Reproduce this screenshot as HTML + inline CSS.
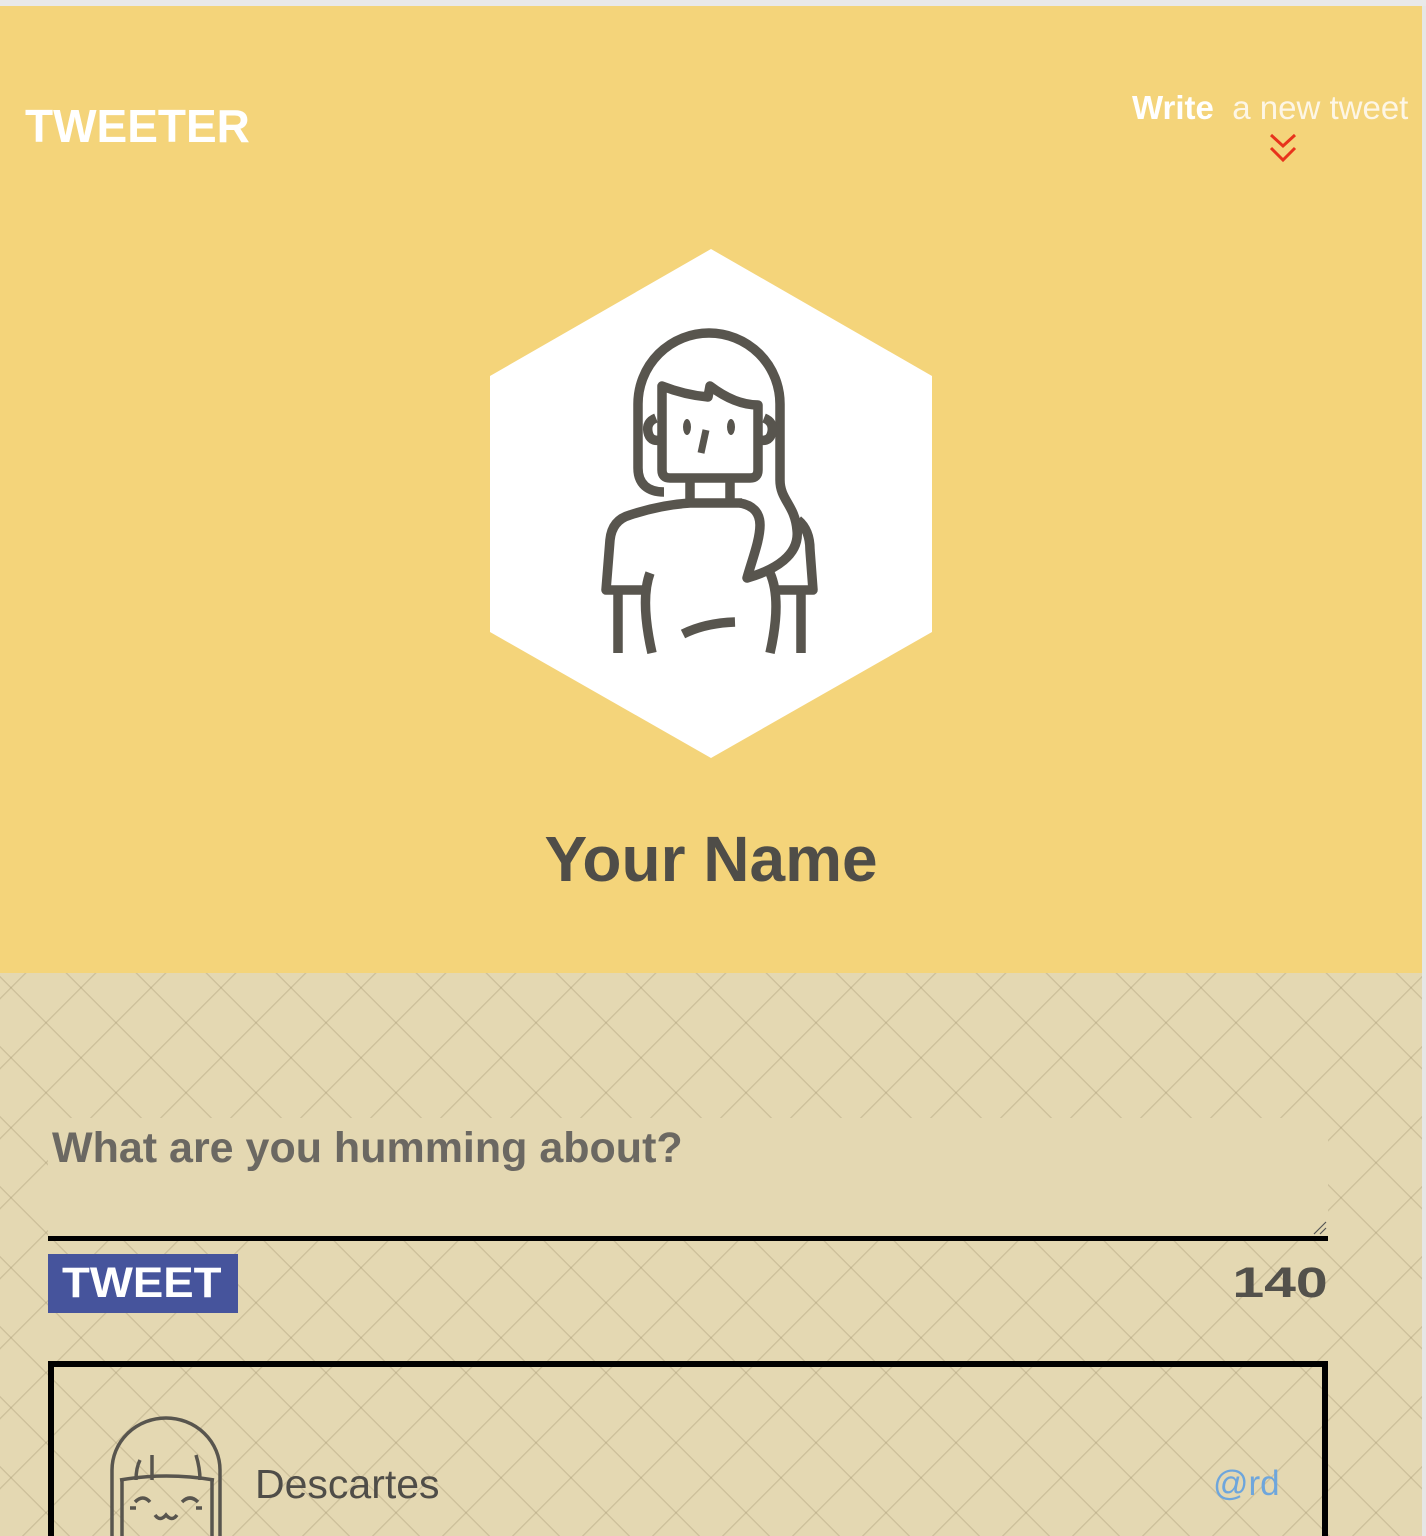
<!DOCTYPE html>
<html><head><meta charset="utf-8">
<style>
*{margin:0;padding:0;box-sizing:border-box}
html,body{width:1426px;height:1536px;overflow:hidden;background:#fff}
body{position:relative;font-family:"Liberation Sans",sans-serif}
#top{position:absolute;left:0;top:0;width:1426px;height:6px;background:#e9e9e9}
#hdr{position:absolute;left:0;top:6px;width:1422px;height:967px;background:#f4d47a}
#edge{position:absolute;left:1422px;top:6px;width:4px;height:1530px;background:#e6e6e6}
#low{position:absolute;left:0;top:973px;width:1422px;height:563px;background-color:#e4d8b2;
background-image:repeating-linear-gradient(45deg,transparent 0,transparent 48.3px,rgba(150,135,100,.28) 48.3px,rgba(150,135,100,.28) 49.5px),
repeating-linear-gradient(-45deg,transparent 0,transparent 48.3px,rgba(150,135,100,.28) 48.3px,rgba(150,135,100,.28) 49.5px);}
.logo{position:absolute;left:25px;top:100px;font-size:46px;font-weight:900;color:#fff;letter-spacing:0px;line-height:52px}
.write{position:absolute;left:1132px;top:88px;font-size:33px;color:#fff;line-height:40px;white-space:nowrap}
.write b{font-weight:bold}
.write span{font-weight:normal;color:#fdf6e6}
.name{position:absolute;left:0;width:1422px;text-align:center;top:822px;font-size:64px;font-weight:bold;color:#4f4d48}
#ta{position:absolute;left:48px;top:1118px;width:1280px;height:118px;background:#e4d8b2}
#tal{position:absolute;left:48px;top:1236px;width:1280px;height:5px;background:#000}
.q{position:absolute;left:52px;top:1124px;font-size:43px;font-weight:bold;color:#6b6862}
.btn{position:absolute;left:48px;top:1254px;width:190px;height:59px;background:#46549c}
.btn span{position:absolute;left:14px;top:4px;font-size:43px;font-weight:900;color:#fff;transform:scaleX(1.06);transform-origin:left;line-height:50px}
.cnt{position:absolute;right:98px;top:1258px;font-size:43px;font-weight:900;color:#53514b;transform:scaleX(1.33);transform-origin:right;line-height:50px}
#card{position:absolute;left:48px;top:1361px;width:1280px;height:200px;border:6px solid #000}
.desc{position:absolute;left:255px;top:1461px;font-size:41px;color:#4f4d48}
.at{position:absolute;left:1213px;top:1464px;font-size:35px;color:#6ea6dc}
</style></head><body>
<div id="top"></div>
<div id="hdr"></div>
<div id="low"></div>
<div id="edge"></div>
<div class="logo">TWEETER</div>
<div class="write"><b>Write</b> <span>&nbsp;a new tweet</span></div>
<svg style="position:absolute;left:0;top:0" width="1426" height="1536">
<polyline points="1271,135 1283,146 1295,135" fill="none" stroke="#e8331c" stroke-width="3"/>
<polyline points="1271,148 1283,160 1295,148" fill="none" stroke="#e8331c" stroke-width="3"/>
<polygon points="711,249 932,376 932,632 711,758 490,632 490,376" fill="#fff"/>
<g fill="none" stroke="#58554e" stroke-width="9.5" stroke-linejoin="round">
<path d="M 664 492 C 648 492 638 484 638 468 L 638 404 A 71 71 0 0 1 780 404 L 780 480 C 780 500 795 505 797 530 C 800 555 775 570 747 578 C 752 560 760 540 760 525 C 760 512 752 505 740 503"/>
<path d="M 662 386 L 662 470 Q 662 478 670 478 L 750 478 Q 758 478 758 470 L 758 405 Q 735 405 710 386 L 708 397 Q 685 395 662 386 Z"/>
<path d="M 656 418 Q 646 422 648 432 Q 650 442 660 440"/>
<path d="M 764 418 Q 774 422 772 432 Q 770 442 760 440"/>
<path d="M 690 478 L 690 500 M 730 478 L 730 500"/>
<path d="M 742 503 L 690 503 Q 660 505 630 515 Q 612 520 610 540 L 606 590 L 642 590"/>
<path d="M 618 590 L 618 653"/>
<path d="M 650 573 Q 640 600 652 653"/>
<path d="M 798 520 Q 810 530 810 550 L 813 590 L 775 590"/>
<path d="M 801 590 L 801 653"/>
<path d="M 770 573 Q 782 600 770 653"/>
<path d="M 683 634 Q 705 623 735 622"/>
</g>
<g fill="#58554e"><ellipse cx="687" cy="427" rx="4" ry="8"/><ellipse cx="731" cy="427" rx="4" ry="8"/></g>
<path d="M 706 430 L 701 453" stroke="#58554e" stroke-width="7"/>
</svg>
<div class="name">Your Name</div>
<div id="ta"></div>
<div class="q">What are you humming about?</div>
<svg style="position:absolute;left:1312px;top:1220px" width="16" height="16"><path d="M2 14 L14 2 M8 14 L14 8" stroke="#555" stroke-width="1.2"/></svg>
<div id="tal"></div>
<div class="btn"><span>TWEET</span></div>
<div class="cnt">140</div>
<div id="card"></div>
<svg style="position:absolute;left:100px;top:1410px" width="130" height="126">
<g fill="none" stroke="#58554e" stroke-width="3.5">
<path d="M12 126 L12 60 A54 52 0 0 1 120 60 L120 126"/>
<path d="M20 70 Q66 62 114 70"/>
<path d="M22 70 L22 126 M112 70 L112 126"/>
<path d="M40 50 Q36 58 36 70 M52 45 L52 70 M96 45 Q100 58 100 70"/>
<path d="M35 92 Q43 84 50 92 M82 92 Q90 84 98 92"/>
<path d="M30 98 L36 98 M96 98 L102 98"/>
<path d="M55 105 Q60 112 66 105 Q72 112 77 105"/>
</g></svg>
<div class="desc">Descartes</div>
<div class="at">@rd</div>
</body></html>
